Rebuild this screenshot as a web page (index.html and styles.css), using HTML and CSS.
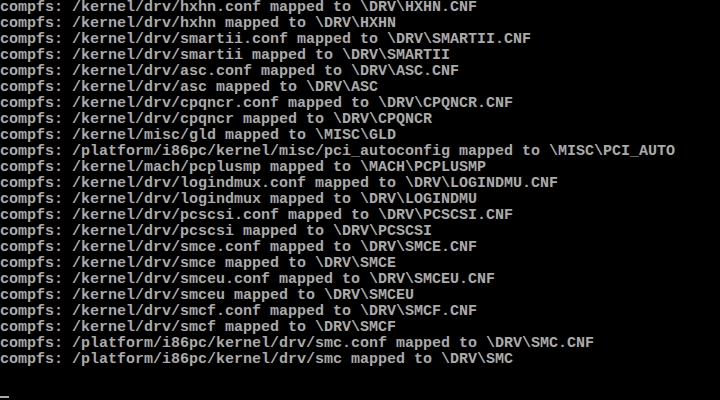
FILE: index.html
```html
<!DOCTYPE html>
<html>
<head>
<meta charset="utf-8">
<link rel="stylesheet" href="styles.css">
</head>
<body>
<pre class="console">compfs: /kernel/drv/hxhn.conf mapped to \DRV\HXHN.CNF
compfs: /kernel/drv/hxhn mapped to \DRV\HXHN
compfs: /kernel/drv/smartii.conf mapped to \DRV\SMARTII.CNF
compfs: /kernel/drv/smartii mapped to \DRV\SMARTII
compfs: /kernel/drv/asc.conf mapped to \DRV\ASC.CNF
compfs: /kernel/drv/asc mapped to \DRV\ASC
compfs: /kernel/drv/cpqncr.conf mapped to \DRV\CPQNCR.CNF
compfs: /kernel/drv/cpqncr mapped to \DRV\CPQNCR
compfs: /kernel/misc/gld mapped to \MISC\GLD
compfs: /platform/i86pc/kernel/misc/pci_autoconfig mapped to \MISC\PCI_AUTO
compfs: /kernel/mach/pcplusmp mapped to \MACH\PCPLUSMP
compfs: /kernel/drv/logindmux.conf mapped to \DRV\LOGINDMU.CNF
compfs: /kernel/drv/logindmux mapped to \DRV\LOGINDMU
compfs: /kernel/drv/pcscsi.conf mapped to \DRV\PCSCSI.CNF
compfs: /kernel/drv/pcscsi mapped to \DRV\PCSCSI
compfs: /kernel/drv/smce.conf mapped to \DRV\SMCE.CNF
compfs: /kernel/drv/smce mapped to \DRV\SMCE
compfs: /kernel/drv/smceu.conf mapped to \DRV\SMCEU.CNF
compfs: /kernel/drv/smceu mapped to \DRV\SMCEU
compfs: /kernel/drv/smcf.conf mapped to \DRV\SMCF.CNF
compfs: /kernel/drv/smcf mapped to \DRV\SMCF
compfs: /platform/i86pc/kernel/drv/smc.conf mapped to \DRV\SMC.CNF
compfs: /platform/i86pc/kernel/drv/smc mapped to \DRV\SMC

<span class="cursor"> </span></pre>
</body>
</html>
```
FILE: styles.css
```css
html, body {
  margin: 0;
  padding: 0;
  background: #000;
  width: 720px;
  height: 400px;
  overflow: hidden;
}
.console {
  margin: 0;
  padding: 0;
  font-family: "Liberation Mono", "DejaVu Sans Mono", monospace;
  font-size: 15px;
  line-height: 16px;
  font-weight: bold;
  color: #aaaaaa;
  white-space: pre;
}
.cursor {
  display: inline-block;
  width: 9px;
  height: 16px;
  vertical-align: top;
  box-shadow: inset 0 -2px 0 #aaaaaa;
  transform: translateY(-2px);
}
```
